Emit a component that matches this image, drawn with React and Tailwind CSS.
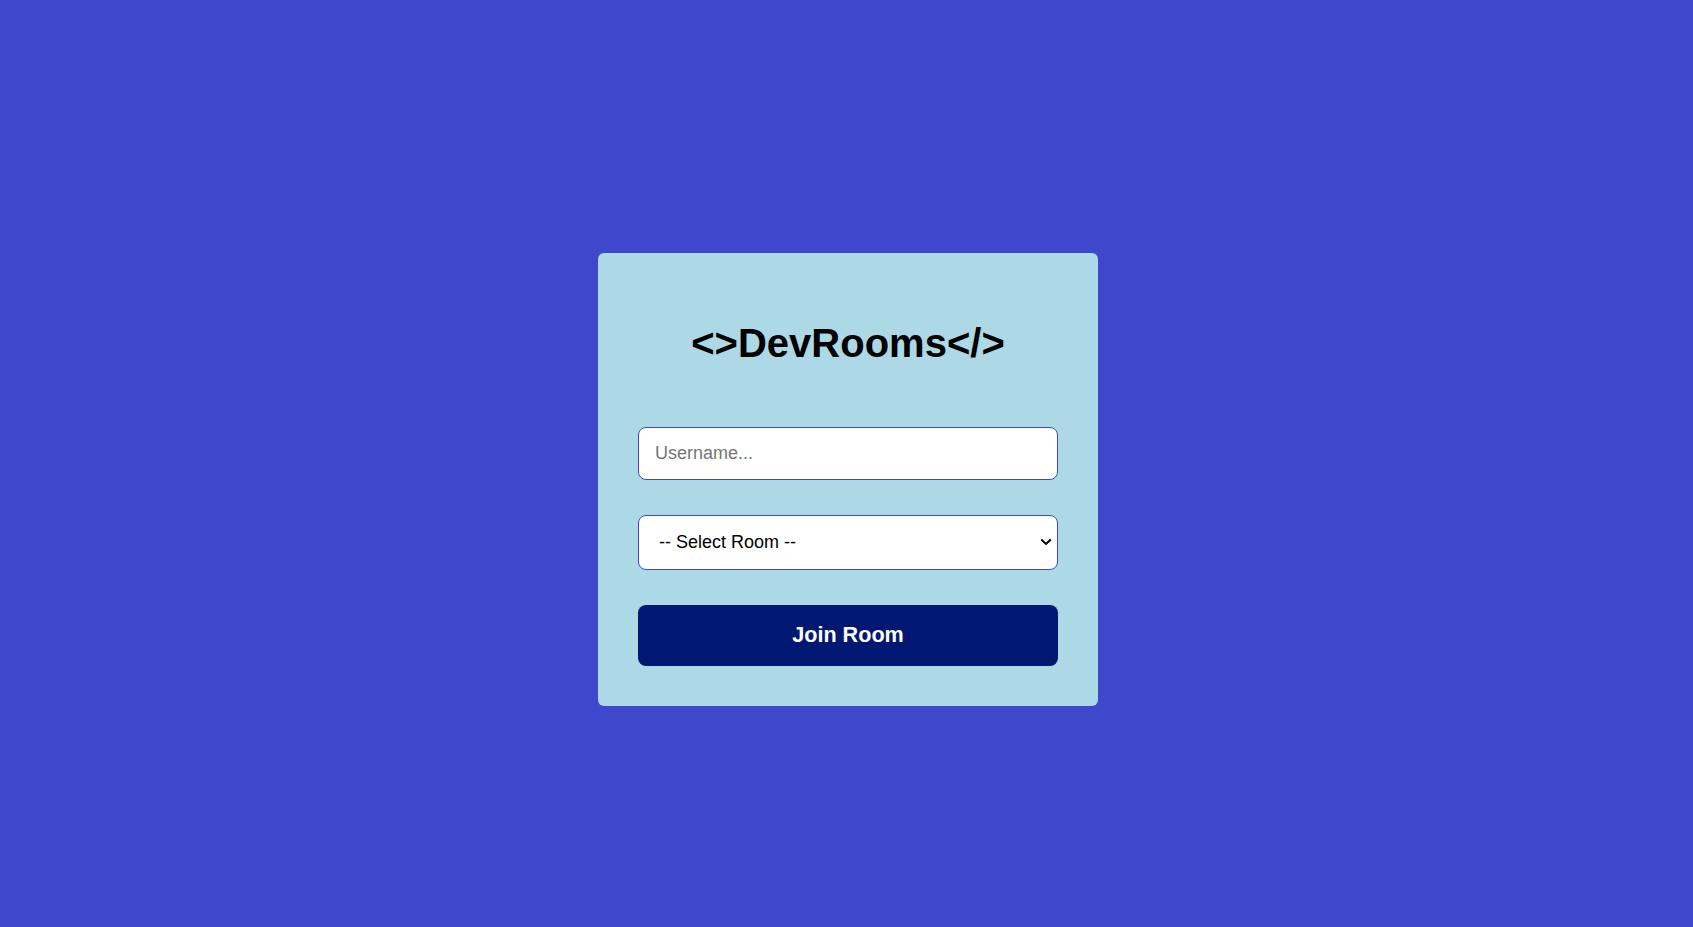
function App() {
    return (
        <div className="min-h-screen flex items-center justify-center bg-[#3f48cc] pt-[31px] pl-[3px] font-['Liberation_Sans',Arial,sans-serif]">
            <div className="w-[500px] bg-[#add8e6] rounded-md px-10 pt-10 pb-10 flex flex-col">
                <h1 className="mt-[27px] mb-[61px] text-[40px] leading-[46px] font-bold text-black text-center">
                    &lt;&gt;DevRooms&lt;/&gt;
                </h1>

                <input
                    type="text"
                    placeholder="Username..."
                    className="h-[53px] w-full bg-white border border-[#3f48cc] rounded-lg px-4 text-[18px] text-black placeholder:text-[#757575] outline-none"
                />

                {/* Room picker with a drawn chevron */}
                <div className="relative mt-[35px]">
                    <select
                        defaultValue=""
                        className="appearance-none h-[55px] w-full bg-white border border-[#3f48cc] rounded-lg pl-5 pr-8 text-[18px] text-black outline-none"
                    >
                        <option value="">-- Select Room --</option>
                        <option value="javascript">JavaScript</option>
                        <option value="python">Python</option>
                    </select>
                    <svg
                        className="pointer-events-none absolute right-[6px] top-1/2 -translate-y-1/2"
                        width="12"
                        height="8"
                        viewBox="0 0 12 8"
                        fill="none"
                    >
                        <path d="M1.2 1.5 L6 6 L10.8 1.5" stroke="#000" strokeWidth="2" />
                    </svg>
                </div>

                <button className="mt-[35px] h-[61px] w-full bg-[#001871] text-white rounded-lg font-bold text-[21.6px]">
                    Join Room
                </button>
            </div>
        </div>
    );
}

export default App;
